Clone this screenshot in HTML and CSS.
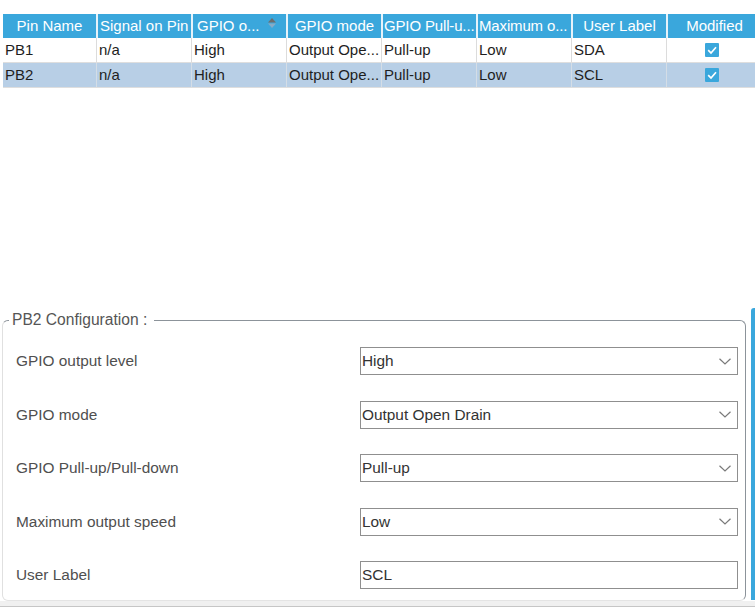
FILE: index.html
```html
<!DOCTYPE html>
<html>
<head>
<meta charset="utf-8">
<title>Pin Configuration</title>
<link rel="stylesheet" href="styles.css">
</head>
<body>
<div class="page">
  <div class="table">
    <div class="tr head">
      <div class="th">Pin Name</div>
      <div class="th left clip">Signal on Pin</div>
      <div class="th left sortable"><span class="th-text">GPIO o...</span><svg class="sort" width="8" height="10" viewBox="0 0 8 10"><polygon points="0,4.5 4,0 8,4.5" fill="#6d6d6d"/><polygon points="0,5.5 4,10 8,5.5" fill="#86abc6"/></svg></div>
      <div class="th">GPIO mode</div>
      <div class="th left tight">GPIO Pull-u...</div>
      <div class="th left tight">Maximum o...</div>
      <div class="th">User Label</div>
      <div class="th">Modified</div>
    </div>
    <div class="tr">
      <div class="td">PB1</div>
      <div class="td">n/a</div>
      <div class="td">High</div>
      <div class="td">Output Ope...</div>
      <div class="td">Pull-up</div>
      <div class="td">Low</div>
      <div class="td">SDA</div>
      <div class="td check-cell"><span class="check"><svg width="14" height="14" viewBox="0 0 14 14"><polyline points="3.2,7.2 6,10 11,4.2" fill="none" stroke="#fff" stroke-width="1.7"/></svg></span></div>
    </div>
    <div class="tr selected">
      <div class="td">PB2</div>
      <div class="td">n/a</div>
      <div class="td">High</div>
      <div class="td">Output Ope...</div>
      <div class="td">Pull-up</div>
      <div class="td">Low</div>
      <div class="td">SCL</div>
      <div class="td check-cell"><span class="check"><svg width="14" height="14" viewBox="0 0 14 14"><polyline points="3.2,7.2 6,10 11,4.2" fill="none" stroke="#fff" stroke-width="1.7"/></svg></span></div>
    </div>
  </div>

  <div class="config-wrap">
    <fieldset class="config">
      <legend>PB2 Configuration :</legend>
      <div class="form">
        <div class="label">GPIO output level</div>
        <div class="field select"><span>High</span><svg class="chev" width="12" height="7" viewBox="0 0 12 7"><polyline points="0.5,0.8 6,6 11.5,0.8" fill="none" stroke="#7a7a7a" stroke-width="1.2"/></svg></div>

        <div class="label">GPIO mode</div>
        <div class="field select"><span>Output Open Drain</span><svg class="chev" width="12" height="7" viewBox="0 0 12 7"><polyline points="0.5,0.8 6,6 11.5,0.8" fill="none" stroke="#7a7a7a" stroke-width="1.2"/></svg></div>

        <div class="label">GPIO Pull-up/Pull-down</div>
        <div class="field select"><span>Pull-up</span><svg class="chev" width="12" height="7" viewBox="0 0 12 7"><polyline points="0.5,0.8 6,6 11.5,0.8" fill="none" stroke="#7a7a7a" stroke-width="1.2"/></svg></div>

        <div class="label">Maximum output speed</div>
        <div class="field select"><span>Low</span><svg class="chev" width="12" height="7" viewBox="0 0 12 7"><polyline points="0.5,0.8 6,6 11.5,0.8" fill="none" stroke="#7a7a7a" stroke-width="1.2"/></svg></div>

        <div class="label">User Label</div>
        <div class="field"><span>SCL</span></div>
      </div>
    </fieldset>
    <div class="scrollbar"></div>
  </div>

  <div class="statusbar"></div>
</div>
</body>
</html>
```

FILE: styles.css
```css
* { box-sizing: border-box; }

html, body {
  margin: 0;
  padding: 0;
  background: #ffffff;
}

body {
  font-family: "Liberation Sans", Arial, sans-serif;
  font-size: 15px;
  color: #1e1e1e;
}

.page {
  width: 755px;
  height: 608px;
  overflow: hidden;
  display: flex;
  flex-direction: column;
  background: #ffffff;
}

/* ---------- table ---------- */
.table {
  margin: 14px 0 0 3px;
  width: 760px;
  flex: none;
}

.tr {
  display: grid;
  grid-template-columns: 93px repeat(7, 95px);
  height: 25px;
  border-bottom: 1px solid #dedede;
}

.tr.head {
  height: 24px;
  border-bottom: none;
  background: #3aa7dc;
}

.tr.selected {
  background: #b8cfe6;
}

.th {
  color: #ffffff;
  text-align: center;
  line-height: 24px;
  padding: 0 2px;
  white-space: nowrap;
  overflow: hidden;
}

.th + .th {
  border-left: 2px solid #e6f2fa;
}

.th.left { text-align: left; }
.th.clip { padding-right: 0; }
.th.tight { padding: 0 0 0 1px; letter-spacing: -0.15px; }

.th.sortable {
  display: flex;
  align-items: flex-start;
  padding-left: 4px;
  padding-right: 0;
}

.th-text {
  flex: 1;
  overflow: hidden;
}

.sort {
  flex: none;
  margin: 4px 10px 0 0;
}

.td {
  line-height: 24px;
  padding: 0 2px;
  white-space: nowrap;
  overflow: hidden;
  color: #1e1e1e;
}

.td + .td {
  border-left: 1px solid #dcdcdc;
}

.tr.selected .td + .td {
  border-left-color: #d4dde6;
}

.check-cell {
  display: flex;
  align-items: center;
  justify-content: center;
  padding-right: 6px;
}

.check {
  width: 14px;
  height: 14px;
  background: #3aa7dc;
  border-radius: 1px;
  display: block;
}

.check svg { display: block; }

/* ---------- configuration ---------- */
.config-wrap {
  margin-top: 220px;
  display: flex;
  align-items: flex-start;
  flex: none;
  width: 760px;
}

.config {
  flex: none;
  margin: 3px 0 0 2px;
  padding: 0;
  width: 744px;
  min-width: 0;
  border: 1px solid #8c939a;
  border-left-color: #e0e0e0;
  border-bottom-color: #e4e4e4;
  border-radius: 6px;
}

.config legend {
  margin-left: 6px;
  padding: 0 7px 0 3px;
  font-size: 15.6px;
  line-height: 18px;
  color: #555555;
}

.form {
  display: grid;
  grid-template-columns: 1fr 378px;
  row-gap: 25.5px;
  align-items: center;
  padding: 18px 7px 11px 13px;
  font-size: 15.4px;
}

.label {
  color: #4f4f4f;
  white-space: nowrap;
}

.field {
  height: 28px;
  border: 1px solid #8f8f8f;
  background: #ffffff;
  display: flex;
  align-items: center;
  justify-content: space-between;
  padding: 0 5px 0 1px;
  color: #333333;
}

.chev {
  display: block;
  margin-right: 1px;
}

.scrollbar {
  flex: none;
  margin-left: 5px;
  width: 8px;
  height: 292px;
  background: #3aa7dc;
  border-radius: 3px 0 0 0;
}

/* ---------- bottom strip ---------- */
.statusbar {
  flex: none;
  height: 6px;
  background: #f0f0f0;
  border-bottom: 1px solid #c6c6c6;
}
```
